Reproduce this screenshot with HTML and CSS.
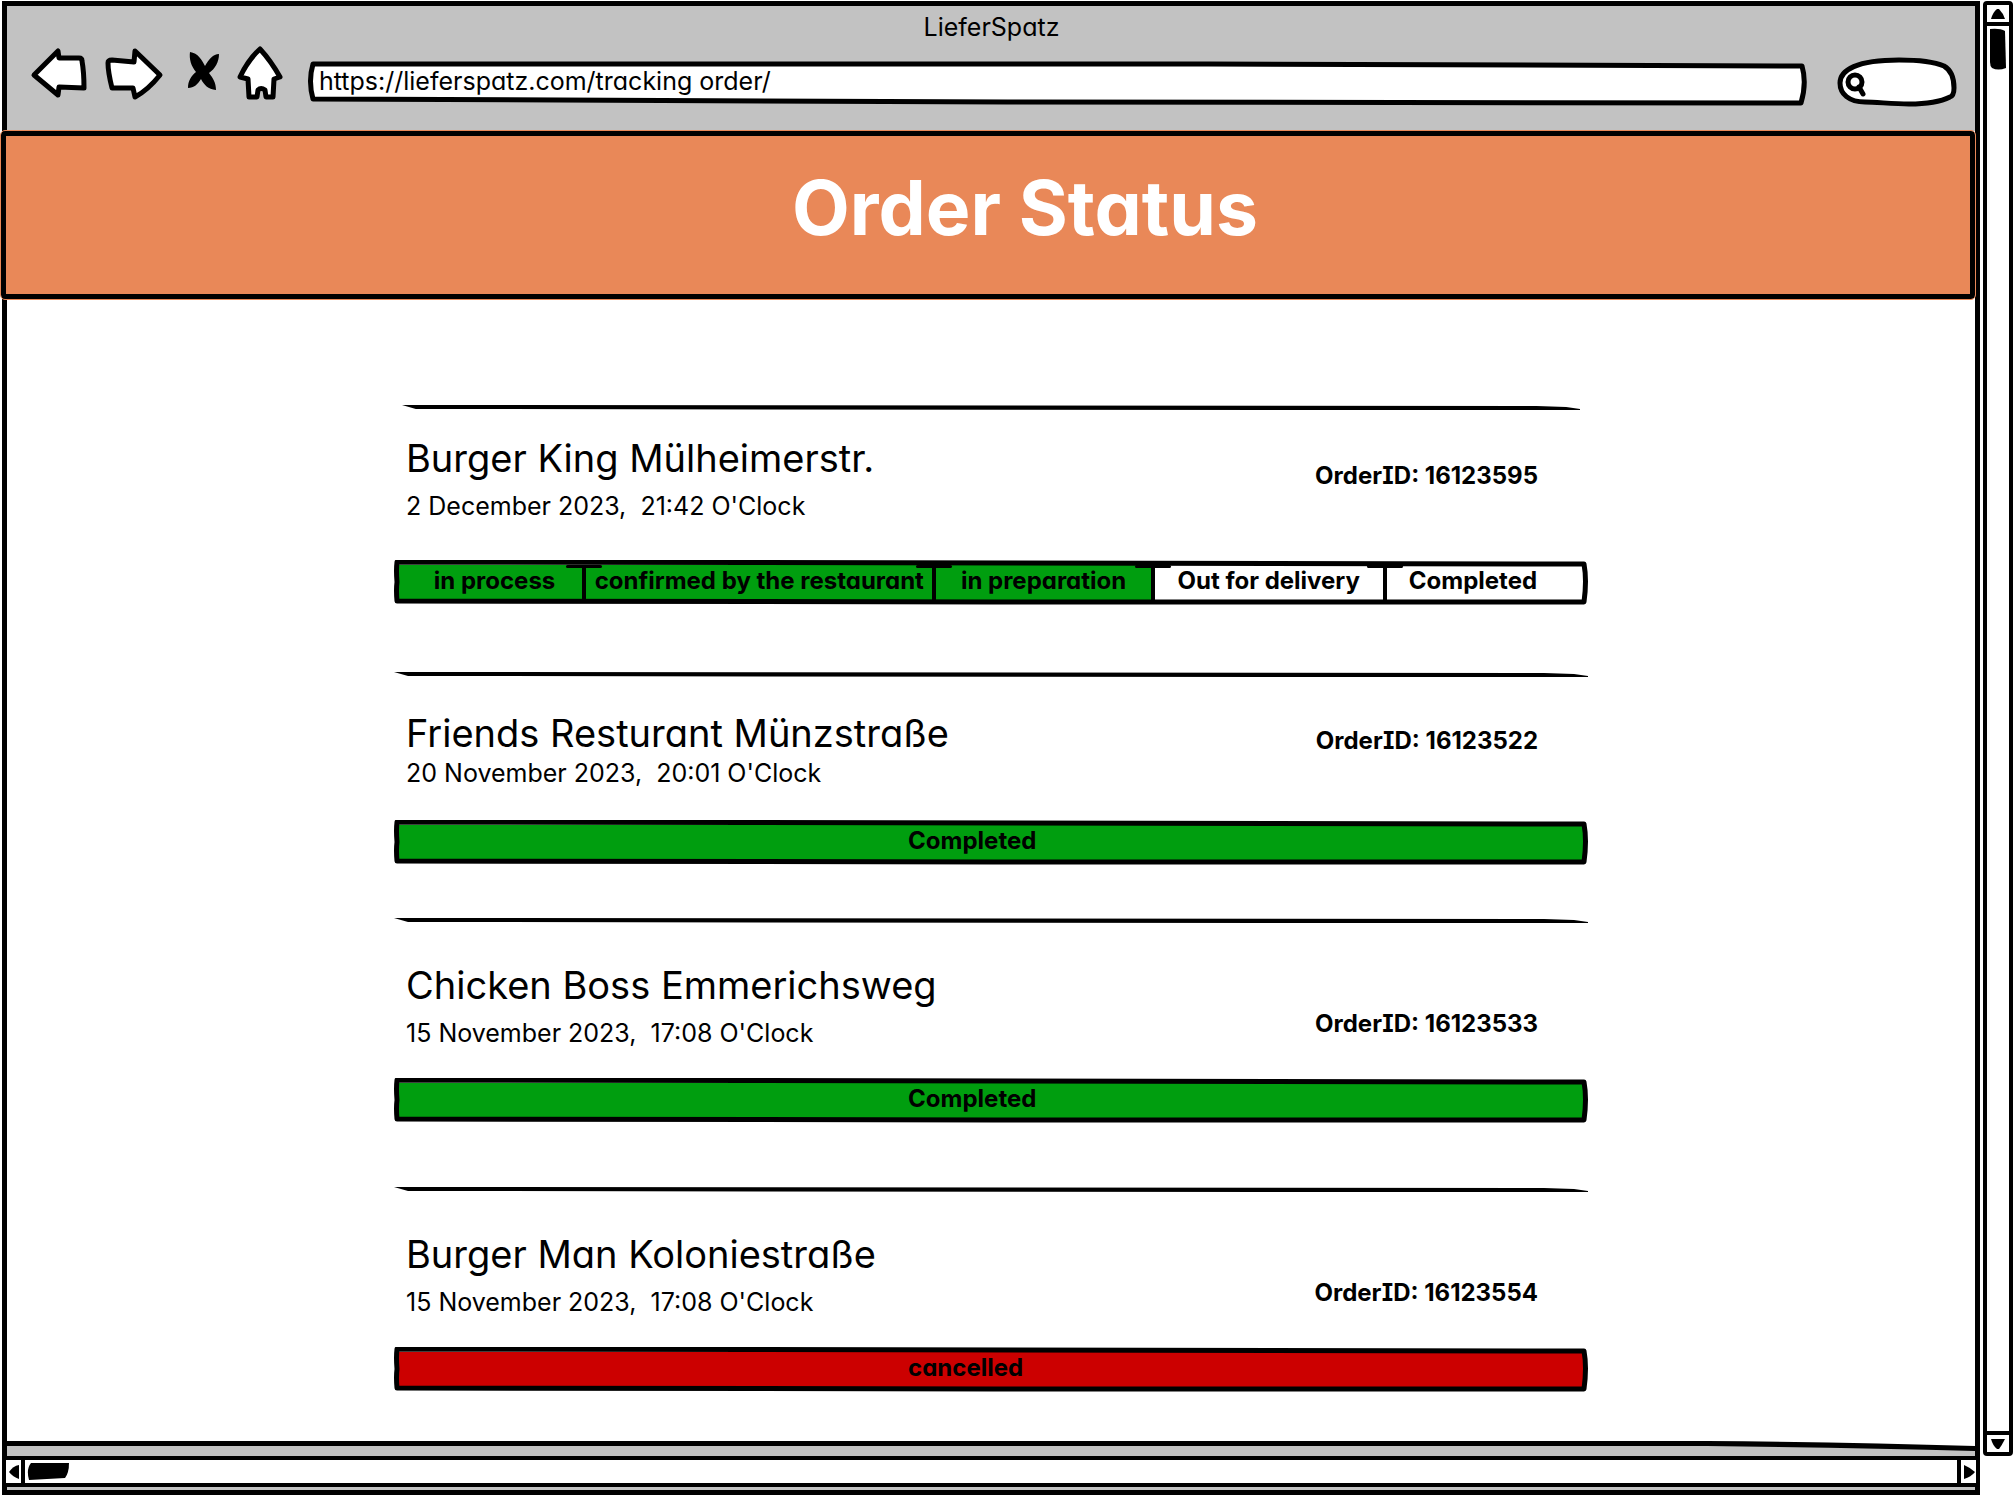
FILE: index.html
```html
<!DOCTYPE html>
<html lang="en">
<head>
<meta charset="utf-8">
<meta name="viewport" content="width=device-width, initial-scale=1">
<title>LieferSpatz</title>
<link rel="stylesheet" href="styles.css">
</head>
<body>
<div class="screen">
  <div class="window">
    <header class="toolbar">
      <p class="window-title">LieferSpatz</p>
      <div class="controls">
        <button class="icon-button" type="button" aria-label="Back">
          <svg class="ink" width="58" height="64" viewBox="0 0 58 64"><path d="M4 29L28 5L29 12L49 12Q52 12 52 15Q54 26 54 42L29 41L28 49Z"/></svg>
        </button>
        <button class="icon-button" type="button" aria-label="Forward">
          <svg class="ink" width="60" height="64" viewBox="0 0 60 64"><path d="M8 14L30 16L31 5L56 29Q44 44 31 51L29 42L8 42Q4 26 4 17Q4 14 8 14Z"/></svg>
        </button>
        <button class="icon-button" type="button" aria-label="Stop">
          <svg width="40" height="64" viewBox="0 0 40 64"><path d="M10 6C18 7 22 14 25 20C29 13 33 8 39 8C39 16 35 23 29 27C33 32 36 37 36 44C28 43 24 39 21 33C18 38 14 42 8 42C8 35 11 30 16 26C11 20 9 13 10 6Z"/></svg>
        </button>
        <button class="icon-button" type="button" aria-label="Home">
          <svg class="ink" width="48" height="64" viewBox="0 0 48 64"><path d="M24 3Q35 15 44 31L38 33L37 51H30L29 44Q25 41 22 44L21 51H13L12 33L4 31Q12 14 24 3Z"/></svg>
        </button>
        <div class="address">
          <svg class="sketch ink" viewBox="0 0 1499 46" preserveAspectRatio="none"><path d="M5 3L900 3L1494 5Q1499 22 1493 42L700 41L5 38Q0 20 5 3Z"/></svg>
          <input class="address-field" type="text" aria-label="Address" value="https://lieferspatz.com/tracking order/">
        </div>
        <div class="search">
          <svg class="sketch ink" viewBox="0 0 120 64"><path d="M3 37C3 24 20 14 62 14C85 14 100 17 107 20C114 24 117 33 117 42C117 46 116 50 113 51C105 55 90 58 72 58C55 58 40 56 28 56C12 56 3 48 3 37Z"/><circle cx="18" cy="36" r="7"/><path d="M22 41L26 48"/></svg>
          <input class="search-field" type="search" aria-label="Search">
        </div>
      </div>
    </header>

    <div class="banner">
      <h1>Order Status</h1>
    </div>

    <main class="orders">
      <article class="order order-first">
        <svg class="rule" viewBox="0 0 1194 5" preserveAspectRatio="none"><path d="M0 0L30 0L1150 1L1180 2L1194 4V5L900 5L14 4Z"/></svg>
        <div class="summary">
          <h2>Burger King Mülheimerstr.</h2>
          <p class="time">2 December 2023,&nbsp; 21:42 O'Clock</p>
          <p class="order-id">OrderID: 16123595</p>
        </div>
        <div class="bar">
          <ol class="steps">
            <li class="done">in process</li>
            <li class="done">confirmed by the restaurant</li>
            <li class="done">in preparation</li>
            <li>Out for delivery</li>
            <li>Completed</li>
          </ol>
          <svg class="sketch frame" viewBox="0 0 1194 45" preserveAspectRatio="none"><path d="M3 2L1190 4Q1193 20 1190 42L600 42L3 41Q2 30 3 22Q2 10 3 2Z"/></svg>
        </div>
      </article>

      <article class="order order-second">
        <svg class="rule" viewBox="0 0 1194 5" preserveAspectRatio="none"><path d="M0 0L30 0L1150 1L1180 2L1194 4V5L900 5L14 4Z"/></svg>
        <div class="summary">
          <h2>Friends Resturant Münzstraße</h2>
          <p class="time">20 November 2023,&nbsp; 20:01 O'Clock</p>
          <p class="order-id">OrderID: 16123522</p>
        </div>
        <div class="bar">
          <p class="result done">Completed</p>
          <svg class="sketch frame" viewBox="0 0 1194 45" preserveAspectRatio="none"><path d="M3 2L1190 4Q1193 20 1190 42L600 42L3 41Q2 30 3 22Q2 10 3 2Z"/></svg>
        </div>
      </article>

      <article class="order order-third">
        <svg class="rule" viewBox="0 0 1194 5" preserveAspectRatio="none"><path d="M0 0L30 0L1150 1L1180 2L1194 4V5L900 5L14 4Z"/></svg>
        <div class="summary">
          <h2>Chicken Boss Emmerichsweg</h2>
          <p class="time">15 November 2023,&nbsp; 17:08 O'Clock</p>
          <p class="order-id">OrderID: 16123533</p>
        </div>
        <div class="bar">
          <p class="result done">Completed</p>
          <svg class="sketch frame" viewBox="0 0 1194 45" preserveAspectRatio="none"><path d="M3 2L1190 4Q1193 20 1190 42L600 42L3 41Q2 30 3 22Q2 10 3 2Z"/></svg>
        </div>
      </article>

      <article class="order order-fourth">
        <svg class="rule" viewBox="0 0 1194 5" preserveAspectRatio="none"><path d="M0 0L30 0L1150 1L1180 2L1194 4V5L900 5L14 4Z"/></svg>
        <div class="summary">
          <h2>Burger Man Koloniestraße</h2>
          <p class="time">15 November 2023,&nbsp; 17:08 O'Clock</p>
          <p class="order-id">OrderID: 16123554</p>
        </div>
        <div class="bar">
          <p class="result cancelled">cancelled</p>
          <svg class="sketch frame" viewBox="0 0 1194 45" preserveAspectRatio="none"><path d="M3 2L1190 4Q1193 20 1190 42L600 42L3 41Q2 30 3 22Q2 10 3 2Z"/></svg>
        </div>
      </article>
    </main>

    <footer class="status-strip">
      <svg class="edge" viewBox="0 0 1968 15" preserveAspectRatio="none"><path class="paper" d="M0 0H1968V7L1700 2H0Z"/><path d="M0 0L1700 0Q1840 1 1968 5V10Q1840 7 1700 5L0 5Z"/></svg>
      <div class="scrollbar scrollbar-x">
        <button type="button" aria-label="Scroll left"><svg width="12" height="16" viewBox="0 0 12 16"><path d="M11 1V15Q5 13 1 8Q5 2 11 1Z"/></svg></button>
        <div class="track"><svg width="42" height="17" viewBox="0 0 42 17"><path d="M4 0L42 0Q42 10 38 15L2 17Q-1 6 4 0Z"/></svg></div>
        <button type="button" aria-label="Scroll right"><svg width="12" height="16" viewBox="0 0 12 16"><path d="M1 1V15Q8 13 12 8Q8 4 1 1Z"/></svg></button>
      </div>
    </footer>
  </div>

  <div class="scrollbar scrollbar-y">
    <button type="button" aria-label="Scroll up"><svg width="16" height="12" viewBox="0 0 16 12"><path d="M1 11H15Q13 5 9 1H7Q3 4 1 11Z"/></svg></button>
    <div class="track"><svg width="17" height="42" viewBox="0 0 17 42"><path d="M0 1Q10 0 15 3L16 40Q8 43 2 40Q0 38 0 34Z"/></svg></div>
    <button type="button" aria-label="Scroll down"><svg width="16" height="12" viewBox="0 0 16 12"><path d="M1 1H15Q12 7 9 11H7Q3 8 1 1Z"/></svg></button>
  </div>
</div>
</body>
</html>
```
FILE: styles.css
```css
* {
  box-sizing: border-box;
}

body {
  margin: 0;
  background: #fff;
  color: #000;
  font: 400 25px/32px Inter, "Noto Sans", sans-serif;
  font-feature-settings: "cv11";
}

h1,
h2,
p,
ol {
  margin: 0;
  padding: 0;
}

svg {
  display: block;
}

button {
  display: grid;
  place-items: center;
  padding: 0;
  border: 0;
  background: none;
}

input {
  border: 0;
  outline: 0;
  background: none;
  color: inherit;
  font: inherit;
  font-feature-settings: inherit;
}

.ink {
  fill: #fff;
  stroke: #000;
  stroke-width: 5px;
  stroke-linejoin: round;
  stroke-linecap: round;
}

.sketch {
  position: absolute;
  inset: 0;
  width: 100%;
  height: 100%;
  pointer-events: none;
}

.sketch path {
  vector-effect: non-scaling-stroke;
}

.screen {
  display: grid;
  grid-template-columns: minmax(0, 1fr) 30px;
  gap: 3px;
  min-height: 100vh;
  padding: 1px 1px 3px 2px;
}

.window {
  display: flex;
  flex-direction: column;
  border: 5px solid #000;
}

/* Browser toolbar */

.toolbar {
  padding: 4px 18px 21px 23px;
  background: #c2c2c2;
}

.window-title {
  margin-bottom: 2px;
  padding-right: 4px;
  line-height: 34px;
  text-align: center;
}

.controls {
  display: flex;
  align-items: center;
  gap: 16px;
}

.address {
  position: relative;
  flex: 1;
  height: 46px;
  margin: 12px 14px 0 8px;
}

.address-field {
  position: relative;
  width: 100%;
  height: 40px;
  padding: 0 11px;
}

.search {
  position: relative;
  width: 120px;
  height: 64px;
}

.search-field {
  position: relative;
  width: 100%;
  height: 100%;
  padding: 14px 12px 6px 32px;
}

/* Page heading */

.banner {
  margin: 0 0 0 -6px;
  padding: 24px 0 38px 74px;
  border: 5px solid #000;
  border-radius: 4px;
  outline: 1px solid #e98858;
  background: #e98858;
  color: #fff;
  text-align: center;
}

h1 {
  font-size: 75px;
  font-weight: 700;
  line-height: 96px;
}

/* Orders */

.orders {
  flex: 1;
  width: 100%;
  max-width: 1194px;
  margin: 0 auto;
  padding: 106px 0 45px;
}

.order {
  --lead: 38px;
  --time-gap: 8px;
  --tail: 29px;
  --id-drop: 47px;
  margin-bottom: 64px;
}

.order-first {
  --lead: 24px;
  --tail: 38px;
  --id-drop: 26px;
  margin-bottom: 67px;
}

.order-second {
  --lead: 32px;
  --time-gap: 0px;
  --tail: 31px;
  --id-drop: 16px;
  margin-bottom: 53px;
}

.order:last-child {
  margin-bottom: 0;
}

.rule {
  width: 100%;
  height: 5px;
}

.order-first .rule {
  width: calc(100% - 16px);
  margin: 0 8px;
}

.summary {
  display: grid;
  grid-template-columns: 1fr auto;
  row-gap: var(--time-gap);
  padding: var(--lead) 50px var(--tail) 12px;
}

h2 {
  font-size: 38px;
  font-weight: 400;
  line-height: 48px;
}

.time {
  grid-column: 1;
}

.order-id {
  grid-area: 1 / 2 / 3 / 3;
  margin-top: var(--id-drop);
  font-size: 24px;
  font-weight: 700;
  line-height: 32px;
  font-feature-settings: "cv08", "cv11";
}

.bar {
  position: relative;
  height: 45px;
  padding: 5px;
  font-size: 24px;
  font-weight: 700;
  line-height: 32px;
}

.frame {
  fill: none;
  stroke: #000;
  stroke-width: 5px;
  stroke-linejoin: round;
}

.steps {
  display: grid;
  grid-template-columns: 183fr 350fr 218fr 232fr 200fr;
  height: 100%;
  list-style: none;
  text-align: center;
  white-space: nowrap;
}

.steps li {
  position: relative;
}

.steps li + li {
  border-left: 4px solid #000;
}

/* Blob of ink where a separator meets the top of the frame */
.steps li + li::before {
  content: "";
  position: absolute;
  top: 0;
  left: -20px;
  width: 36px;
  height: 3px;
  border-radius: 2px;
  background: #000;
}

.steps li:first-child {
  padding-left: 8px;
}

.steps li:last-child {
  padding-right: 24px;
}

.result {
  height: 100%;
  padding-left: 43%;
}

.done {
  background: #009e0f;
}

.cancelled {
  background: #c00;
}

/* Window bottom and scrollbars */

.status-strip {
  padding-bottom: 3px;
  background: #c2c2c2;
}

.edge {
  width: 100%;
  height: 15px;
}

.paper {
  fill: #fff;
}

.scrollbar {
  display: flex;
  border: 4px solid #000;
  border-radius: 4px;
  background: #fff;
}

.scrollbar-x {
  height: 31px;
  margin: 0 -5px;
}

.scrollbar-x button {
  width: 15px;
}

.scrollbar-x .track {
  flex: 1;
  padding: 3px 2px;
  border: solid #000;
  border-width: 0 4px;
}

.scrollbar-y {
  flex-direction: column;
  margin-bottom: 39px;
}

.scrollbar-y button {
  height: 17px;
}

.scrollbar-y .track {
  flex: 1;
  padding: 2px 3px;
  border: solid #000;
  border-width: 4px 0;
}
```
